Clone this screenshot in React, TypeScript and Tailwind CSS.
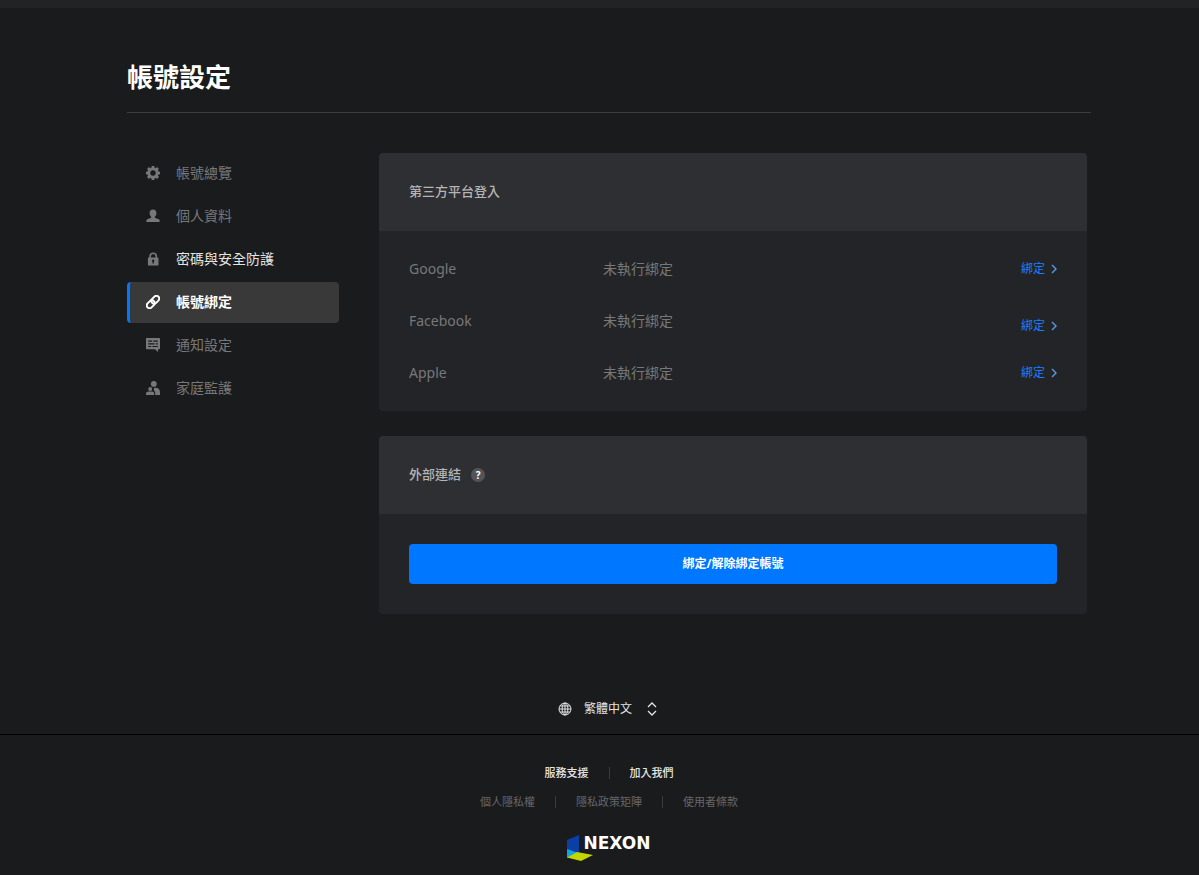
import type { ReactNode } from 'react';
import clsx from 'clsx';

type NavItem = {
  label: string;
  icon: ReactNode;
  active?: boolean;
  bright?: boolean;
};

const iconProps = {
  width: 14,
  height: 14,
  viewBox: '0 0 14 14',
  fill: 'currentColor',
  'aria-hidden': true,
};

function GearIcon() {
  return (
    <svg {...iconProps}>
      <path
        fillRule="evenodd"
        d="M5.7 0h2.6l.35 1.75.9.4L11.1 1.100l1.8 1.8-1.050 1.550.4.9L14 5.700v2.600l-1.750.35-.4.9 1.050 1.550-1.800 1.800-1.550-1.050-.9.4L8.300 14H5.700l-.35-1.750-.9-.4-1.550 1.050-1.800-1.800 1.050-1.550-.4-.9L0 8.300V5.700l1.750-.35.4-.9L1.100 2.900l1.800-1.800 1.550 1.050.9-.4zM7 4.300a2.700 2.700 0 1 0 0 5.400 2.700 2.700 0 0 0 0-5.400z"
      />
    </svg>
  );
}

function PersonIcon() {
  return (
    <svg {...iconProps}>
      <path d="M7 .5c2.200 0 3.400 1.500 3.400 3.500 0 1.600-.6 2.900-1.600 3.700v1.100l3.900 1.400c.6.25.9.8.9 1.400v1.500H.4v-1.500c0-.6.3-1.150.9-1.400l3.900-1.400V7.700C4.200 6.900 3.600 5.600 3.600 4 3.600 2 4.800.5 7 .5z" />
    </svg>
  );
}

function LockIcon() {
  return (
    <svg {...iconProps}>
      <path
        fillRule="evenodd"
        d="M3.300 5.600V4.400a3.900 3.900 0 0 1 7.800 0v1.200h.9c.3 0 .5.2.5.5v6.800c0 .3-.2.5-.5.5H2.400a.5.5 0 0 1-.5-.5V6.100c0-.3.2-.5.5-.5zm1.600 0h4.600V4.400a2.300 2.300 0 0 0-4.600 0zM7.200 7.600a1.200 1.200 0 0 0-.7 2.200v1.700h1.400V9.800a1.200 1.200 0 0 0-.7-2.200z"
      />
    </svg>
  );
}

function ChainIcon() {
  return (
    <svg {...iconProps} fill="none" stroke="currentColor" strokeWidth="2">
      <g transform="rotate(-45 7 7)">
        <rect x="-.6" y="4.200" width="8.800" height="5.600" rx="2.800" />
        <rect x="5.800" y="4.200" width="8.800" height="5.600" rx="2.800" />
      </g>
    </svg>
  );
}

function MessageIcon() {
  return (
    <svg {...iconProps}>
      <path
        fillRule="evenodd"
        d="M1 0h12c.6 0 1 .4 1 1v9.200c0 .6-.4 1-1 1h-1V14l-3-2.800H1c-.6 0-1-.4-1-1V1c0-.6.4-1 1-1zM2.200 2.500v1.200h4V2.500zm5.200 0v1.200h4.400V2.500zM2.200 5.200v1.200h6.400V5.200zm7.600 0v1.200h2V5.200zM2.200 7.900v1.200h3V7.900zm4.200 0v1.200h5.400V7.900z"
      />
    </svg>
  );
}

function FamilyIcon() {
  return (
    <svg {...iconProps}>
      <circle cx="7.800" cy="2.900" r="2.900" />
      <path d="M7.600 7.200c3.800-1.200 6.400.7 6.400 4V14H9.200v-1.700c0-1.300-.5-2.300-1.500-2.900.5-.7.5-1.500-.1-2.200z" />
      <circle cx="4.200" cy="7.900" r="2" />
      <path d="M0 14v-1.200c0-1.500 1.200-2.300 2.600-2.300h3.100c1.400 0 2.500.8 2.500 2.300V14z" />
    </svg>
  );
}

function GlobeIcon() {
  return (
    <svg {...iconProps} fill="none" stroke="currentColor">
      <circle cx="7" cy="7" r="6" />
      <ellipse cx="7" cy="7" rx="2.900" ry="6" />
      <path d="M7 1v12M1 7h12M1.900 4h10.200M1.900 10h10.200" />
    </svg>
  );
}

const navItems: NavItem[] = [
  { label: '帳號總覽', icon: <GearIcon /> },
  { label: '個人資料', icon: <PersonIcon /> },
  { label: '密碼與安全防護', icon: <LockIcon />, bright: true },
  { label: '帳號綁定', icon: <ChainIcon />, active: true },
  { label: '通知設定', icon: <MessageIcon /> },
  { label: '家庭監護', icon: <FamilyIcon /> },
];

const platforms = [
  { name: 'Google', status: '未執行綁定' },
  { name: 'Facebook', status: '未執行綁定', bottom: true },
  { name: 'Apple', status: '未執行綁定' },
];

function SideNav() {
  return (
    <nav className="flex w-[212px] shrink-0 flex-col gap-0.5">
      {navItems.map((item) => (
        <a
          key={item.label}
          href="#"
          className={clsx(
            'flex h-[41px] items-center gap-4 rounded border-l-3 pb-0.5 pl-4 text-sm',
            item.active
              ? 'border-[#0077ff] bg-[#393939] font-bold text-white'
              : 'border-transparent text-[#77787a]'
          )}
        >
          {item.icon}
          <span className={clsx(item.bright && 'text-[#e4e4e4]')}>{item.label}</span>
        </a>
      ))}
    </nav>
  );
}

function Card({ title, children }: { title: ReactNode; children: ReactNode }) {
  return (
    <section className="overflow-hidden rounded bg-[#232427]">
      <header className="flex h-[78px] items-center gap-2.5 bg-[#2e2f32] px-[30px] text-[13px] font-medium text-[#b4b4b5]">
        {title}
      </header>
      {children}
    </section>
  );
}

function PlatformTable() {
  return (
    <div className="px-[30px] py-3">
      <table className="w-full table-fixed text-left text-sm text-[#77787a]">
        <tbody>
          {platforms.map((p) => (
            <tr key={p.name} className="h-[52px]">
              <th scope="row" className="w-[194px] p-0 font-normal">{p.name}</th>
              <td className="p-0">{p.status}</td>
              <td className={clsx('w-24 p-0', p.bottom ? 'align-bottom' : 'align-middle')}>
                <a href="#" className="flex h-[42px] items-center justify-end gap-1 text-xs text-[#1a7dff]">
                  綁定
                  <svg width="8" height="10" viewBox="0 0 8 10" fill="none" stroke="#5b93d6" strokeWidth="1.500" aria-hidden="true">
                    <path d="M3 1l4 4-4 4" />
                  </svg>
                </a>
              </td>
            </tr>
          ))}
        </tbody>
      </table>
    </div>
  );
}

function LanguageSelect() {
  return (
    <div className="relative flex items-center gap-3 text-[#e4e4e4]">
      <GlobeIcon />
      <select
        aria-label="Language"
        className="w-[73px] appearance-none bg-transparent text-xs leading-5 outline-none"
        defaultValue="zh-TW"
      >
        <option value="zh-TW">繁體中文</option>
      </select>
      <svg
        className="pointer-events-none absolute right-0"
        width="10"
        height="14"
        viewBox="0 0 10 14"
        fill="none"
        stroke="currentColor"
        strokeWidth="1.300"
        aria-hidden="true"
      >
        <path d="M1 5l4-4 4 4M1 9l4 4 4-4" />
      </svg>
    </div>
  );
}

function FooterLinks({ links, className }: { links: string[]; className: string }) {
  return (
    <ul className={clsx('flex justify-center divide-x divide-[#3a3b3d] text-[11px] leading-3', className)}>
      {links.map((link) => (
        <li key={link} className="px-5">
          <a href="#">{link}</a>
        </li>
      ))}
    </ul>
  );
}

function Logo() {
  return (
    <a href="#" className="flex h-[26px] items-start justify-center text-white">
      <svg width="26" height="26" viewBox="0 0 26 26" aria-hidden="true">
        <path d="M0 5l12-5v18L0 15z" fill="#0b3fa8" />
        <path d="M0 14l10 3.500L0 23z" fill="#12a5e0" />
        <path d="M0 22.500L10 17l16 3-12 6z" fill="#c3d600" />
      </svg>
      <span className="-ml-2.5 font-['DejaVu_Sans'] text-[17px] leading-4 font-bold">NEXON</span>
    </a>
  );
}

export default function App() {
  return (
    <div className="min-h-screen bg-[#1a1b1c] font-['Noto_Sans','Noto_Sans_CJK_TC',sans-serif]">
      <div className="h-2 bg-[#222325]" />

      <main className="pl-[19px]">
        <div className="mx-auto max-w-[964px]">
          <h1 className="border-b border-[#3b3c3d] pt-[51px] pb-[17px] text-[26px] leading-9 font-bold text-white">
            帳號設定
          </h1>
          <div className="flex gap-10 pt-10 pr-1">
            <SideNav />
            <div className="flex min-w-0 flex-1 flex-col gap-[25px]">
              <Card title={<h2>第三方平台登入</h2>}>
                <PlatformTable />
              </Card>
              <Card
                title={
                  <>
                    <h2>外部連結</h2>
                    <button
                      type="button"
                      className="flex size-3.5 items-center justify-center rounded-full bg-[#535457] text-[10px] leading-none font-bold text-white"
                    >
                      ?
                    </button>
                  </>
                }
              >
                <div className="p-[30px]">
                  <button type="button" className="h-10 w-full rounded bg-[#0077ff] text-xs font-bold text-white">
                    綁定/解除綁定帳號
                  </button>
                </div>
              </Card>
            </div>
          </div>
        </div>
      </main>

      <footer className="pt-[85px]">
        <div className="flex justify-center border-b border-black pb-[15px] pl-4">
          <LanguageSelect />
        </div>
        <div className="pt-8 pb-3 pl-[19px]">
          <FooterLinks links={['服務支援', '加入我們']} className="font-medium text-[#e4e4e4]" />
          <FooterLinks links={['個人隱私權', '隱私政策矩陣', '使用者條款']} className="pt-[17px] text-[#66676a]" />
          <div className="pt-[27px]">
            <Logo />
          </div>
        </div>
      </footer>
    </div>
  );
}
